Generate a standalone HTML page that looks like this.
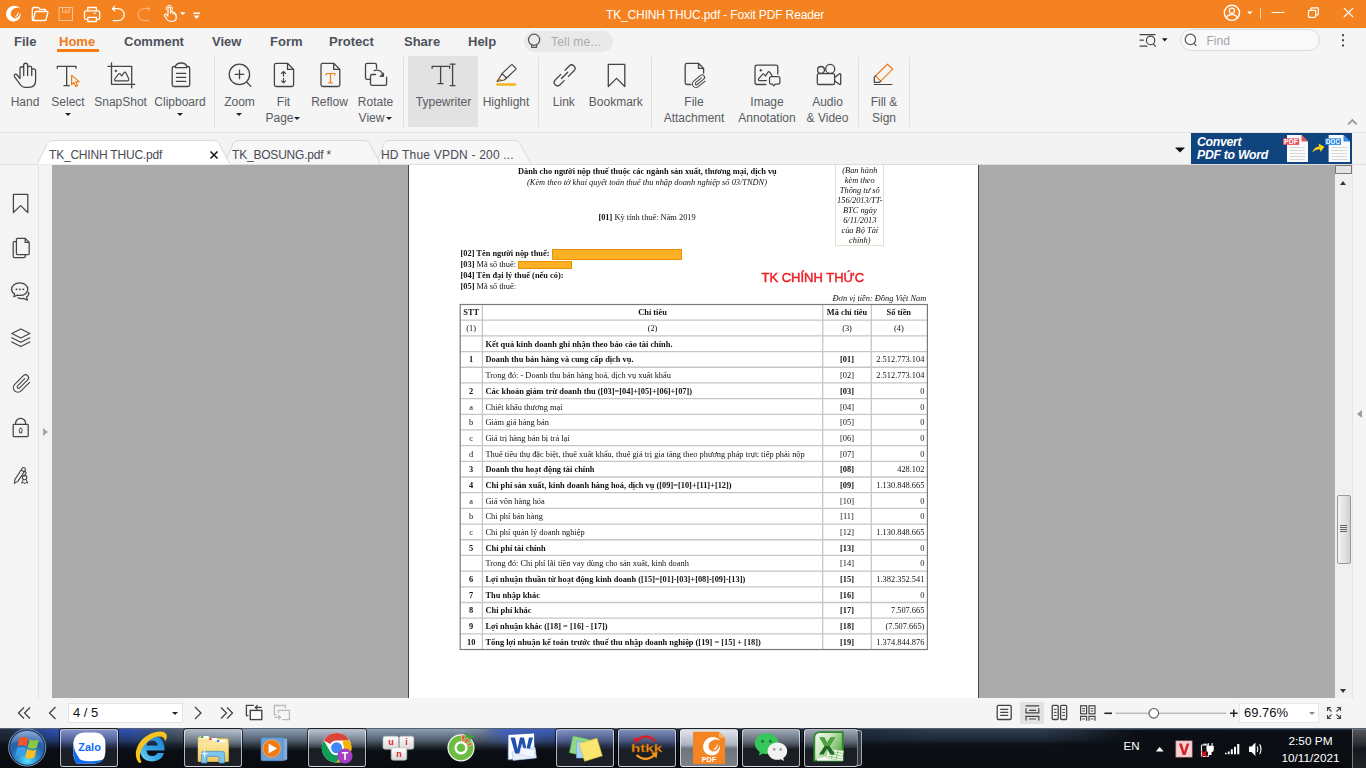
<!DOCTYPE html>
<html><head><meta charset="utf-8"><title>TK_CHINH THUC.pdf - Foxit PDF Reader</title>
<style>
html,body{margin:0;padding:0;}
body{width:1366px;height:768px;overflow:hidden;position:relative;background:#f5f5f5;font-family:"Liberation Sans",sans-serif;font-size:12px;color:#4a4a4a;}
div,span{position:absolute;white-space:pre;}
.c{transform:translateX(-50%);text-align:center;}
#title{left:0;top:0;width:1366px;height:28px;background:#f58220;}
.t{left:606px;top:8px;font-size:12px;line-height:14px;color:#fff;letter-spacing:-0.14px;}
#menu{left:0;top:28px;width:1366px;height:26px;background:#f5f5f5;}
.m{font-weight:bold;font-size:13px;line-height:16px;color:#4d525b;}
#ribbon{left:0;top:54px;width:1366px;height:78px;background:#f5f5f5;border-bottom:1px solid #e2e2e2;}
.lb{font-size:12px;line-height:16px;color:#585b62;}
.sep{width:1px;top:57px;height:70px;background:#e0e0e0;}
.dd{width:0;height:0;border-left:3px solid transparent;border-right:3px solid transparent;border-top:3.5px solid #222;}
#tabs{left:0;top:133px;width:1366px;height:32px;background:#f3f3f3;}
.tab{font-size:12px;line-height:14px;top:148px;color:#4a4a55;letter-spacing:-0.2px}
#side{left:0;top:165px;width:38px;height:533px;background:#f4f4f4;border-right:1px solid #e2e2e2;}
#side2{left:39px;top:165px;width:13px;height:533px;background:#f4f4f4;}
#gray{left:52px;top:165px;width:1283px;height:533px;background:#ababab;}
#page{left:408px;top:165px;width:571px;height:533px;background:#fff;border-left:1px solid #474747;border-right:1px solid #474747;box-sizing:border-box}
#vs{left:1335px;top:165px;width:17px;height:533px;background:#f0f0f0;}
#rp{left:1352px;top:165px;width:14px;height:533px;background:#f5f5f5;border-left:1px solid #e4e4e4;box-sizing:border-box}
#status{left:0;top:698px;width:1366px;height:30px;background:#f5f5f5;}
#task{left:0;top:728px;width:1366px;height:40px;background:linear-gradient(#3a4656 0,#202c3c 2px,#19232f 12px,#0c1016 17px,#080a0e 40px);}
.p{font-family:"Liberation Serif",serif;font-size:8.37px;line-height:10px;color:#111;}
.b{font-weight:bold}.i{font-style:italic}
.tb{top:732px;height:35px;width:57px;border:1px solid rgba(255,255,255,.38);border-radius:3px;box-sizing:border-box;background:linear-gradient(rgba(255,255,255,.30),rgba(255,255,255,.12) 45%,rgba(255,255,255,.03) 50%,rgba(255,255,255,.10));box-shadow:0 0 0 1px rgba(0,0,0,.55)}
</style></head><body>

<div id="title"><span class="t">TK_CHINH THUC.pdf - Foxit PDF Reader</span></div>
<div id="menu"></div>
<span class="m" style="left:14px;top:34px">File</span>
<span class="m" style="left:59px;color:#f07a14;top:34px">Home</span>
<span class="m" style="left:124px;top:34px">Comment</span>
<span class="m" style="left:212px;top:34px">View</span>
<span class="m" style="left:270px;top:34px">Form</span>
<span class="m" style="left:329px;top:34px">Protect</span>
<span class="m" style="left:404px;top:34px">Share</span>
<span class="m" style="left:468px;top:34px">Help</span>
<div style="left:57px;top:49px;width:42px;height:3px;background:#f57c14"></div>
<div style="left:524px;top:31px;width:89px;height:21px;border-radius:10.5px;background:#e9e9e9"></div>
<span style="left:551px;top:35px;font-size:12px;line-height:15px;color:#a9a9b0;letter-spacing:.2px">Tell me...</span>
<div style="left:1180px;top:29px;width:138px;height:20px;border-radius:11px;background:#f9f9f9;border:1px solid #dcdcdc"></div>
<span style="left:1206.5px;top:34px;font-size:12px;line-height:15px;color:#a3a3ad">Find</span>
<div id="ribbon"></div>
<div style="left:408px;top:56px;width:70px;height:71px;background:#e2e2e2"></div>
<div class="sep" style="left:214px"></div>
<div class="sep" style="left:403px"></div>
<div class="sep" style="left:538px"></div>
<div class="sep" style="left:651px"></div>
<div class="sep" style="left:858px"></div>
<div class="sep" style="left:909px"></div>
<span class="lb c" style="left:25px;top:94px">Hand</span>
<span class="lb c" style="left:68px;top:94px">Select</span>
<div class="dd" style="left:64.5px;top:113px"></div>
<span class="lb c" style="left:120.6px;top:94px">SnapShot</span>
<span class="lb c" style="left:180px;top:94px">Clipboard</span>
<div class="dd" style="left:176.5px;top:113px"></div>
<span class="lb c" style="left:239.5px;top:94px">Zoom</span>
<div class="dd" style="left:236.0px;top:113px"></div>
<span class="lb c" style="left:283.5px;top:94px">Fit</span>
<span class="lb c" style="left:279.5px;top:110px">Page</span>
<span class="lb c" style="left:329.5px;top:94px">Reflow</span>
<span class="lb c" style="left:375.5px;top:94px">Rotate</span>
<span class="lb c" style="left:371.5px;top:110px">View</span>
<span class="lb c" style="left:443.5px;top:94px">Typewriter</span>
<span class="lb c" style="left:506px;top:94px">Highlight</span>
<span class="lb c" style="left:563.8px;top:94px">Link</span>
<span class="lb c" style="left:615.8px;top:94px">Bookmark</span>
<span class="lb c" style="left:694px;top:94px">File</span>
<span class="lb c" style="left:694px;top:110px">Attachment</span>
<span class="lb c" style="left:767px;top:94px">Image</span>
<span class="lb c" style="left:767px;top:110px">Annotation</span>
<span class="lb c" style="left:827.5px;top:94px">Audio</span>
<span class="lb c" style="left:827.5px;top:110px">& Video</span>
<span class="lb c" style="left:884px;top:94px">Fill &</span>
<span class="lb c" style="left:884px;top:110px">Sign</span>
<div class="dd" style="left:293.5px;top:117px"></div>
<div class="dd" style="left:385.5px;top:117px"></div>
<svg style="position:absolute;left:1346px;top:117px" width="14" height="10" viewBox="1346 117 14 10"><path d="M1348.200 124.300L1352.400 120L1356.600 124.300" stroke="#9a9a9a" stroke-width="1.800" fill="none"/></svg>
<div id="tabs"></div>
<svg style="position:absolute;left:0;top:133px" width="1366" height="33" viewBox="0 133 1366 33">
<path d="M375.5 165 L384 143.5 Q385.3 140.5 389 140.5 L514 140.5 Q518.5 140.5 520 143.5 L531.5 165 Z" fill="#f7f7f7" stroke="#dadada"/>
<path d="M224 165 L233 143.5 Q234.3 140.5 238 140.5 L364 140.5 Q368 140.5 369.5 143.5 L381 165 Z" fill="#f7f7f7" stroke="#dadada"/>
<path d="M0 164.5 L1366 164.5" stroke="#dcdcdc"/>
<path d="M37 164.5 L47.5 143.5 Q49 140.5 53 140.5 L213 140.5 Q217.5 140.5 219 143.5 L230 164.5" fill="#ffffff" stroke="#dadada"/><path d="M37 164.5H230" stroke="#ececec"/>
<path d="M210.5 151.5 L217.5 158.5 M217.5 151.5 L210.5 158.5" stroke="#111" stroke-width="1.5"/>
<path d="M1175 147.5 L1185 147.5 L1180 152.5 Z" fill="#111"/>
</svg>
<span class="tab" style="left:49px">TK_CHINH THUC.pdf</span>
<span class="tab" style="left:232px">TK_BOSUNG.pdf *</span>
<span class="tab" style="left:381px;letter-spacing:0.2px">HD Thue VPDN - 200 ...</span>
<div style="left:1191px;top:133px;width:161px;height:31px;background:#0f447f"></div>
<span style="left:1197px;top:136px;font-size:12.3px;line-height:13.1px;font-weight:bold;font-style:italic;color:#fff;letter-spacing:-0.3px">Convert
PDF to Word</span>
<div id="side"></div><div id="side2"></div><div id="gray"></div><div id="page"></div><div id="vs"></div><div id="rp"></div><div id="pdftxt" style="left:0;top:0;width:1366px;height:768px;will-change:transform;opacity:.999">
<span class="p c b" style="left:647.4px;top:166.60px;">Dành cho người nộp thuế thuộc các ngành sản xuất, thương mại, dịch vụ</span>
<span class="p c i" style="left:647.0px;top:177.60px;">(Kèm theo tờ khai quyết toán thuế thu nhập doanh nghiệp số 03/TNDN)</span>
<span class="p " style="left:598.4px;top:212.70px;"><b>[01]</b> Kỳ tính thuế: Năm 2019</span>
<div style="left:835px;top:160px;width:49px;height:86px;border:1px solid #e6e1d0;box-sizing:border-box;clip-path:inset(5px 0 0 0)"></div>
<span class="p c i" style="left:859.8px;top:165.80px;">(Ban hành</span>
<span class="p c i" style="left:859.8px;top:175.84px;">kèm theo</span>
<span class="p c i" style="left:859.8px;top:185.88px;">Thông tư số</span>
<span class="p c i" style="left:859.8px;top:195.92px;">156/2013/TT-</span>
<span class="p c i" style="left:859.8px;top:205.96px;">BTC ngày</span>
<span class="p c i" style="left:859.8px;top:216.00px;">6/11/2013</span>
<span class="p c i" style="left:859.8px;top:226.04px;">của Bộ Tài</span>
<span class="p c i" style="left:859.8px;top:236.08px;">chính)</span>
<span class="p b" style="left:460.5px;top:249.10px;">[02] Tên người nộp thuế:</span>
<span class="p " style="left:460.5px;top:260.00px;"><b>[03]</b> Mã số thuế:</span>
<span class="p b" style="left:460.5px;top:270.90px;">[04] Tên đại lý thuế (nếu có):</span>
<span class="p " style="left:460.5px;top:281.80px;"><b>[05]</b> Mã số thuế:</span>
<div style="left:552px;top:249px;width:130px;height:10.5px;background:#fcb024;border:1px solid #ee8f08;box-sizing:border-box"></div>
<div style="left:517.5px;top:261.3px;width:54.5px;height:8.2px;background:#fcb024;border:1px solid #ee8f08;box-sizing:border-box"></div>
<span style="left:761.5px;top:270px;font-size:13px;line-height:16px;color:#ee1d23;-webkit-text-stroke:0.45px #ee1d23">TK CHÍNH THỨC</span>
<span class="p i" style="right:439.80px;top:293.60px;">Đơn vị tiền: Đồng Việt Nam</span>
<svg style="position:absolute;left:0;top:0" width="1366" height="768" viewBox="0 0 1366 768" fill="none"><path d="M460.2 320.18H927.4M460.2 335.87H927.4M460.2 351.55H927.4M460.2 367.23H927.4M460.2 382.91H927.4M460.2 398.60H927.4M460.2 414.28H927.4M460.2 429.96H927.4M460.2 445.65H927.4M460.2 461.33H927.4M460.2 477.01H927.4M460.2 492.70H927.4M460.2 508.38H927.4M460.2 524.06H927.4M460.2 539.75H927.4M460.2 555.43H927.4M460.2 571.11H927.4M460.2 586.79H927.4M460.2 602.48H927.4M460.2 618.16H927.4M460.2 633.84H927.4M482.4 304.5V649.53M822.7 304.5V649.53M871.3 304.5V649.53" stroke="#c6c6c6" stroke-width="1.3"/><rect x="460.2" y="304.5" width="467.20" height="345.03" stroke="#7a7a7a" stroke-width="1.2"/></svg>
<span class="p c b" style="left:471.2px;top:308.40px;">STT</span>
<span class="p c b" style="left:652.5px;top:308.40px;">Chỉ tiêu</span>
<span class="p c b" style="left:847.0px;top:308.40px;">Mã chỉ tiêu</span>
<span class="p c b" style="left:898.8px;top:308.40px;">Số tiền</span>
<span class="p c " style="left:471.2px;top:324.08px;">(1)</span>
<span class="p c " style="left:652.5px;top:324.08px;">(2)</span>
<span class="p c " style="left:847.0px;top:324.08px;">(3)</span>
<span class="p c " style="left:898.8px;top:324.08px;">(4)</span>
<span class="p b" style="left:485.5px;top:339.77px;">Kết quả kinh doanh ghi nhận theo báo cáo tài chính.</span>
<span class="p c b" style="left:471.2px;top:355.45px;">1</span>
<span class="p b" style="left:485.5px;top:355.45px;">Doanh thu bán hàng và cung cấp dịch vụ.</span>
<span class="p c b" style="left:847.0px;top:355.45px;">[01]</span>
<span class="p " style="right:441.60px;top:355.45px;">2.512.773.104</span>
<span class="p " style="left:485.5px;top:371.13px;">Trong đó: - Doanh thu bán hàng hoá, dịch vụ xuất khẩu</span>
<span class="p c " style="left:847.0px;top:371.13px;">[02]</span>
<span class="p " style="right:441.60px;top:371.13px;">2.512.773.104</span>
<span class="p c b" style="left:471.2px;top:386.81px;">2</span>
<span class="p b" style="left:485.5px;top:386.81px;">Các khoản giảm trừ doanh thu ([03]=[04]+[05]+[06]+[07])</span>
<span class="p c b" style="left:847.0px;top:386.81px;">[03]</span>
<span class="p " style="right:441.60px;top:386.81px;">0</span>
<span class="p c " style="left:471.2px;top:402.50px;">a</span>
<span class="p " style="left:485.5px;top:402.50px;">Chiết khấu thương mại</span>
<span class="p c " style="left:847.0px;top:402.50px;">[04]</span>
<span class="p " style="right:441.60px;top:402.50px;">0</span>
<span class="p c " style="left:471.2px;top:418.18px;">b</span>
<span class="p " style="left:485.5px;top:418.18px;">Giảm giá hàng bán</span>
<span class="p c " style="left:847.0px;top:418.18px;">[05]</span>
<span class="p " style="right:441.60px;top:418.18px;">0</span>
<span class="p c " style="left:471.2px;top:433.86px;">c</span>
<span class="p " style="left:485.5px;top:433.86px;">Giá trị hàng bán bị trả lại</span>
<span class="p c " style="left:847.0px;top:433.86px;">[06]</span>
<span class="p " style="right:441.60px;top:433.86px;">0</span>
<span class="p c " style="left:471.2px;top:449.55px;">d</span>
<span class="p " style="left:485.5px;top:449.55px;">Thuế tiêu thụ đặc biệt, thuế xuất khẩu, thuế giá trị gia tăng theo phương pháp trực tiếp phải nộp</span>
<span class="p c " style="left:847.0px;top:449.55px;">[07]</span>
<span class="p " style="right:441.60px;top:449.55px;">0</span>
<span class="p c b" style="left:471.2px;top:465.23px;">3</span>
<span class="p b" style="left:485.5px;top:465.23px;">Doanh thu hoạt động tài chính</span>
<span class="p c b" style="left:847.0px;top:465.23px;">[08]</span>
<span class="p " style="right:441.60px;top:465.23px;">428.102</span>
<span class="p c b" style="left:471.2px;top:480.91px;">4</span>
<span class="p b" style="left:485.5px;top:480.91px;">Chi phí sản xuất, kinh doanh hàng hoá, dịch vụ ([09]=[10]+[11]+[12])</span>
<span class="p c b" style="left:847.0px;top:480.91px;">[09]</span>
<span class="p " style="right:441.60px;top:480.91px;">1.130.848.665</span>
<span class="p c " style="left:471.2px;top:496.60px;">a</span>
<span class="p " style="left:485.5px;top:496.60px;">Giá vốn hàng hóa</span>
<span class="p c " style="left:847.0px;top:496.60px;">[10]</span>
<span class="p " style="right:441.60px;top:496.60px;">0</span>
<span class="p c " style="left:471.2px;top:512.28px;">b</span>
<span class="p " style="left:485.5px;top:512.28px;">Chi phí bán hàng</span>
<span class="p c " style="left:847.0px;top:512.28px;">[11]</span>
<span class="p " style="right:441.60px;top:512.28px;">0</span>
<span class="p c " style="left:471.2px;top:527.96px;">c</span>
<span class="p " style="left:485.5px;top:527.96px;">Chi phí quản lý doanh nghiệp</span>
<span class="p c " style="left:847.0px;top:527.96px;">[12]</span>
<span class="p " style="right:441.60px;top:527.96px;">1.130.848.665</span>
<span class="p c b" style="left:471.2px;top:543.64px;">5</span>
<span class="p b" style="left:485.5px;top:543.64px;">Chi phí tài chính</span>
<span class="p c b" style="left:847.0px;top:543.64px;">[13]</span>
<span class="p " style="right:441.60px;top:543.64px;">0</span>
<span class="p " style="left:485.5px;top:559.33px;">Trong đó: Chi phí lãi tiền vay dùng cho sản xuất, kinh doanh</span>
<span class="p c " style="left:847.0px;top:559.33px;">[14]</span>
<span class="p " style="right:441.60px;top:559.33px;">0</span>
<span class="p c b" style="left:471.2px;top:575.01px;">6</span>
<span class="p b" style="left:485.5px;top:575.01px;">Lợi nhuận thuần từ hoạt động kinh doanh ([15]=[01]-[03]+[08]-[09]-[13])</span>
<span class="p c b" style="left:847.0px;top:575.01px;">[15]</span>
<span class="p " style="right:441.60px;top:575.01px;">1.382.352.541</span>
<span class="p c b" style="left:471.2px;top:590.69px;">7</span>
<span class="p b" style="left:485.5px;top:590.69px;">Thu nhập khác</span>
<span class="p c b" style="left:847.0px;top:590.69px;">[16]</span>
<span class="p " style="right:441.60px;top:590.69px;">0</span>
<span class="p c b" style="left:471.2px;top:606.38px;">8</span>
<span class="p b" style="left:485.5px;top:606.38px;">Chi phí khác</span>
<span class="p c b" style="left:847.0px;top:606.38px;">[17]</span>
<span class="p " style="right:441.60px;top:606.38px;">7.507.665</span>
<span class="p c b" style="left:471.2px;top:622.06px;">9</span>
<span class="p b" style="left:485.5px;top:622.06px;">Lợi nhuận khác ([18] = [16] - [17])</span>
<span class="p c b" style="left:847.0px;top:622.06px;">[18]</span>
<span class="p " style="right:441.60px;top:622.06px;">(7.507.665)</span>
<span class="p c b" style="left:471.2px;top:637.74px;">10</span>
<span class="p b" style="left:485.5px;top:637.74px;">Tổng lợi nhuận kế toán trước thuế thu nhập doanh nghiệp ([19] = [15] + [18])</span>
<span class="p c b" style="left:847.0px;top:637.74px;">[19]</span>
<span class="p " style="right:441.60px;top:637.74px;">1.374.844.876</span>
</div><div style="left:1335px;top:165px;width:17px;height:9px;background:#e2e2e2;border:1px solid #777;box-sizing:border-box"></div>
<div style="left:1340px;top:181px;width:0;height:0;border-left:3.5px solid transparent;border-right:3.5px solid transparent;border-bottom:4px solid #333"></div>
<div style="left:1340px;top:689px;width:0;height:0;border-left:3.5px solid transparent;border-right:3.5px solid transparent;border-top:4px solid #333"></div>
<div style="left:1336.5px;top:495px;width:14px;height:69px;border:1px solid #9a9a9a;border-radius:2px;box-sizing:border-box;background:linear-gradient(90deg,#f4f4f4,#e2e2e2 50%,#cfcfcf)"></div>
<div style="left:1340px;top:525px;width:7px;height:1px;background:#666"></div>
<div style="left:1340px;top:527px;width:7px;height:1px;background:#666"></div>
<div style="left:1340px;top:529px;width:7px;height:1px;background:#666"></div>
<div style="left:1340px;top:531px;width:7px;height:1px;background:#666"></div>
<div style="left:1357px;top:410px;width:0;height:0;border-top:4.5px solid transparent;border-bottom:4.5px solid transparent;border-right:5px solid #9c9c9c"></div>
<div style="left:43px;top:428px;width:0;height:0;border-top:4.5px solid transparent;border-bottom:4.5px solid transparent;border-left:5px solid #a6a6a6"></div>
<div id="status"></div>
<div style="left:68px;top:703px;width:115px;height:20px;background:#fff;border:1px solid #e3e3e3;box-sizing:border-box"></div>
<span style="left:73px;top:705px;font-size:13px;line-height:16px;color:#111">4 / 5</span>
<div class="dd" style="left:172px;top:711.5px"></div>
<div style="left:1239px;top:703px;width:80px;height:20px;background:#fff;border:1px solid #e8e8e8;box-sizing:border-box"></div>
<span style="left:1244px;top:705px;font-size:13px;line-height:16px;color:#111">69.76%</span>
<div class="dd" style="left:1309px;top:711.5px;border-top-color:#888"></div>
<div style="left:1020px;top:702px;width:24px;height:22px;background:#e2e2e2"></div>
<svg style="position:absolute;left:0;top:698px" width="1366" height="30" viewBox="0 698 1366 30" fill="none" stroke="#444" stroke-width="1.3">
<path d="M24 707.5L18.5 713L24 718.5M30 707.5L24.5 713L30 718.5"/>
<path d="M55.5 707L49.5 713L55.5 719"/>
<path d="M195 707L201 713L195 719"/>
<path d="M221 707.5L226.500 713L221 718.5M227 707.5L232.5 713L227 718.5"/>
<path d="M253.800 705.300H246.400V715.600H248.400M261.800 707.400H255.400M257.600 705.200L255.300 707.400L257.600 709.600" stroke-width="1.300"/><rect x="250.300" y="710.400" width="11.500" height="9.200" fill="#fcfcfc" stroke-width="1.400"/>
<g stroke="#bcbcbc" stroke-width="1.300"><path d="M276.500 714.900H274.400V705.500H285.400V708.500M278.400 713V710.300H289.400V719.600H282.200M274.200 717.400H280.400M278.200 715.200L280.500 717.400L278.200 719.600"/></g>
<rect x="997.200" y="705.300" width="14" height="14.200" rx="1.200"/><path d="M1000.200 709.400H1008.200M1000.200 712.400H1008.200M1000.200 715.400H1008.200" stroke-width="1.100"/>
<path d="M1025.600 705.800H1039.200M1026 708.200V712.800H1038.800V708.200M1029 710.400H1036M1026 720.600V716.400H1038.800V720.600M1029 719H1036" stroke-width="1.200"/>
<rect x="1052.200" y="705.300" width="6" height="14.200" rx="1"/><rect x="1060.600" y="705.300" width="6" height="14.200" rx="1"/><path d="M1053.800 709.400H1056.600M1053.800 712.400H1056.600M1053.800 715.400H1056.600M1062.200 709.400H1065M1062.200 712.400H1065M1062.200 715.400H1065" stroke-width="1"/>
<rect x="1080.600" y="705.800" width="6" height="8" stroke-width="1.200"/><rect x="1089" y="705.800" width="6" height="8" stroke-width="1.200"/><path d="M1082.200 708.600H1085M1082.200 711H1085M1090.600 708.600H1093.400M1090.600 711H1093.400" stroke-width="1"/>
<path d="M1080.600 720.800V716.400H1086.600V720.800M1089 720.800V716.400H1095V720.800M1082.200 719H1085M1090.600 719H1093.400" stroke-width="1.200"/>
<path d="M1104.400 713.300H1112" stroke="#222" stroke-width="1.6"/>
<path d="M1115.500 713.300H1226.500" stroke="#bdbdbd" stroke-width="1.4"/>
<circle cx="1153.800" cy="713.300" r="4.800" fill="#fff" stroke="#555" stroke-width="1.1"/>
<path d="M1230 713.300H1237.600M1233.800 709.500V717.100" stroke="#222" stroke-width="1.5"/>
<path d="M1327.500 711V707.500H1331M1337 707.500H1340.500V711M1340.500 715V718.500H1337M1331 718.500H1327.500V715M1327.500 707.500L1331.500 711.500M1340.500 707.500L1336.500 711.500M1340.500 718.500L1336.500 714.500M1327.500 718.500L1331.500 714.500" stroke-width="1.1"/>
</svg><svg style="position:absolute;left:0;top:0" width="1366" height="28" viewBox="0 0 1366 28" fill="none" stroke="#fff" stroke-width="1.3" stroke-linecap="round" stroke-linejoin="round">
<path d="M20.8 9.2C18.6 5.6 13 4.6 9.2 7.6C5.400 10.600 5 16.600 8.600 19.800C11.800 22.600 17 22 19.400 18.600C20.600 16.800 20.800 14.600 20.200 12.800C19.800 15.200 18.400 17.400 16.200 18C13.400 18.800 11 16.800 10.800 14.200C10.600 11.200 12.800 8.600 15.800 8C17.800 7.600 19.600 8.200 20.800 9.200Z" fill="#fff" stroke="none"/>
<path d="M14.600 16.400C15.400 15.800 16.800 15.600 17.200 14.200C17.400 13.200 18.200 12.600 18.600 11.400C18.800 13 18.400 15.200 17.200 16.200C16.400 16.800 15.400 16.800 14.600 16.400Z" fill="#fff" stroke="none"/>
<path d="M33.200 20.500H44.800Q45.800 20.500 46 19.500L47.900 12.500Q48.100 11.500 47 11.500H36.200Q35.200 11.500 35 12.500L33.200 20.500ZM33.200 20.500Q32.300 20.500 32.300 19.500V9.300Q32.300 7.500 34 7.500H37.800Q38.800 7.500 39.300 8.500L39.800 9.300H44.300Q45.800 9.300 45.800 10.800V11.500"/>
<g stroke="#fac496" stroke-width="1"><rect x="59.500" y="7.500" width="13" height="13"/><path d="M62.500 7.500V12.200H69.200V7.500M65.200 10.200H66.800"/></g>
<rect x="84.500" y="10.800" width="15.200" height="8.600" rx="1.300"/><path d="M87.800 10.800V7.500H96.400V10.800"/><rect x="87.800" y="17.300" width="8.600" height="4.200" fill="#f58220"/><path d="M93.800 13.200H95.600" stroke-width="1.100"/>
<path d="M113.200 20.600H118.200A6 6 0 0 0 118.200 8.600H112.600M114.600 6.400L112.400 8.600L114.600 10.800"/>
<g stroke="#f9b88a" stroke-width="1"><path d="M149 20.600H144.200A6 6 0 0 1 144.200 8.600H149.600M147.600 6.400L149.800 8.600L147.600 10.800"/></g>
<path d="M168 14.500V8.400A1.300 1.300 0 0 1 170.600 8.400V13.200M170.600 12.400A1.200 1.200 0 0 1 173 12.600V14M173 13.200A1.200 1.200 0 0 1 175.200 13.600V14.800M175.200 14.400A0.900 0.900 0 0 1 176.200 15V17.500Q176.200 21.300 172.500 21.300H170.500Q168.500 21.300 167.200 19.500L164.600 15.800Q163.900 14.600 165 14.200Q166 13.900 166.800 14.800L168 16" stroke-width="1.200"/>
<path d="M166.300 9.800A3.200 3.200 0 1 1 172.300 9.600" stroke-width="1"/>
<path d="M180 12.200H185.400L182.700 15.200Z" fill="#fff" stroke="none"/>
<path d="M193.800 13.300H199.400" stroke-width="1.400"/><path d="M193.600 15.600H199.600L196.600 19Z" fill="#fff" stroke="none"/>
<circle cx="1231.900" cy="12.800" r="7.600" stroke-width="1.400"/><circle cx="1231.900" cy="10.800" r="2.600" stroke-width="1.200"/><path d="M1226.800 17.800Q1227.200 14.600 1231.900 14.600Q1236.600 14.600 1237 17.800" stroke-width="1.200"/>
<path d="M1247.200 11.400H1252.400L1249.800 14.400Z" fill="#fff" stroke="none"/>
<path d="M1260.500 8.400V18.600" stroke-width="1" stroke="#fbd0ac"/>
<path d="M1272 12.500H1284" stroke-width="1.200"/>
<path d="M1311 10.300V8.600Q1311 7.900 1311.700 7.900H1317.600Q1318.300 7.900 1318.300 8.600V14.200Q1318.300 14.900 1317.600 14.900H1316" stroke-width="1.200"/><rect x="1308.500" y="10.400" width="7.200" height="7" rx="0.800" stroke-width="1.200"/>
<path d="M1344.200 8.400L1352.800 16.800M1352.800 8.400L1344.200 16.800" stroke-width="1.200"/>
</svg>
<svg style="position:absolute;left:0;top:28px" width="1366" height="26" viewBox="0 28 1366 26" fill="none" stroke="#454545" stroke-width="1.200" stroke-linecap="round" stroke-linejoin="round">
<circle cx="534.100" cy="39.800" r="5.600" stroke="#555"/><path d="M531.600 45.400V47.300H536.600V45.400" stroke="#555"/>
<path d="M1140 34.600H1155M1140 40.200H1143.400M1140 46.200H1147"/><circle cx="1150.600" cy="40.400" r="4.200"/><path d="M1153.400 43.800L1155.400 46.400"/>
<path d="M1162 38.200H1167.400L1164.700 41.400Z" fill="#111" stroke="none"/>
<circle cx="1190.400" cy="39.400" r="5.200" stroke="#555"/><path d="M1194 43.400L1196 45.600" stroke="#555"/>
<path d="M1342 34.200H1344V36.200H1342ZM1342 39.300H1344V41.300H1342ZM1342 44.400H1344V46.400H1342Z" fill="#444" stroke="none"/>
</svg>
<svg style="position:absolute;left:0;top:54px" width="1366" height="78" viewBox="0 54 1366 78" fill="none" stroke="#454545" stroke-width="1.300" stroke-linecap="round" stroke-linejoin="round">
<!-- hand -->
<path d="M20 78.500L17 74.800Q15.600 73.400 14.600 74.600Q13.800 75.600 14.800 77.200L20.600 85.200Q22.400 87.300 25 87.300H29Q35.600 87.300 35.600 80.500V70.800A1.950 1.950 0 0 0 31.700 70.800V75.500M31.700 71V68.200A2.050 2.050 0 0 0 27.600 68.200V75.500M27.600 68.200V65.200A1.950 1.950 0 0 0 23.700 65.200V75.500M23.700 68.600A1.850 1.850 0 0 0 20 68.600V78.500"/>
<!-- select -->
<path d="M57.300 68.300V66.300H76V68.300M66.650 66.300V85.700M64 85.700H69.300"/>
<path d="M71.600 75.400V84.600L73.900 82.500L75.700 86.400L77.500 85.600L75.800 81.800L79.200 81.600Z" stroke="#f07c16" stroke-width="1.200"/>
<!-- snapshot -->
<path d="M111.500 63V84.300H134.800M108 66.300H131.700V87.800"/><circle cx="115.800" cy="70.900" r="0.900" fill="#454545" stroke-width="0.600"/>
<path d="M115 80.800Q114 80 115 78.600L118.400 74.200Q119.400 73 120.400 74.200L121.800 76L123.900 72.800Q125 71.500 126 73L128.600 78.600Q129.200 80.800 127.400 80.800Z" stroke-width="1.200"/>
<!-- clipboard -->
<path d="M175.400 66.500H174Q172.200 66.500 172.200 68.300V84.700Q172.200 86.500 174 86.500H187.900Q189.700 86.500 189.700 84.700V68.300Q189.700 66.500 187.900 66.500H186.900"/>
<path d="M175.400 67.600V66.400Q176.400 63 181.150 63Q185.900 63 186.900 66.400V67.600Z"/>
<path d="M176.400 73.400H185.800M176.400 77.400H185.800M176.400 81.400H185.800" stroke-width="1.200"/>
<!-- zoom -->
<circle cx="239.400" cy="74.400" r="10.200"/><path d="M246.700 82L250.800 86.400M235.300 74.400H243.700M239.500 70.200V78.700"/>
<!-- fit page -->
<path d="M276.200 63.300H287.500L293.600 69.400V84.700Q293.600 86.500 291.800 86.500H276.200Q274.400 86.500 274.400 84.700V65.100Q274.400 63.300 276.200 63.300ZM287.500 63.300V69.400H293.600"/>
<path d="M283.500 71.600V76.200M281.500 73.500L283.500 71.500L285.500 73.500M283.500 78.200V82.800M281.500 80.800L283.500 82.900L285.500 80.800" stroke-width="1.100"/>
<!-- reflow -->
<path d="M322.800 63.300H333.700L339.800 69.400V84.700Q339.800 86.500 338 86.500H322.800Q321 86.500 321 84.700V65.100Q321 63.300 322.800 63.300ZM333.700 63.300V69.400H339.800"/>
<path d="M326.200 75V73.500H334.800V75M330.500 73.500V82.800M328.800 82.800H332.200" stroke="#f07c16" stroke-width="1.200"/>
<!-- rotate view -->
<path d="M370.200 79.300H367.100Q365.500 79.300 365.500 77.700V65Q365.500 63.400 367.100 63.400H374.900Q376.500 63.400 376.500 65V68.600"/>
<path d="M375.600 74.500H372.100Q370.500 74.500 370.500 76.100V83.700Q370.500 85.300 372.100 85.300H385Q386.600 85.300 386.600 83.700V77.200"/>
<path d="M374.100 70.600Q381.200 68.600 383.300 75.800" stroke-width="1.200"/><path d="M380.100 76.400H383.600V73.300Z" fill="#454545" stroke-width="0.900"/>
<!-- typewriter -->
<path d="M432.100 68.300V66.300H449.700V68.300M440.600 66.300V83.700M438 83.700H443.100M452.600 64.200V85.700M450.200 64.200H455M450.200 85.700H455"/>
<!-- highlight -->
<path d="M511.200 64.900Q511.800 64.300 512.400 64.900L515.700 68.200Q516.300 68.800 515.700 69.400L506.600 78L502 73.600ZM502 73.600L500 77L497 81.300L504.200 80L506.600 78" stroke-width="1.200"/>
<path d="M497.200 81.200L499.400 78L501.800 80.300Z" fill="#c98d2e" stroke="none"/>
<path d="M497.200 84.500H515.200" stroke="#f5b21c" stroke-width="2.300"/>
<!-- link -->
<g transform="rotate(-45 564.600 75.400)"><path d="M562.600 72H554.700A3.400 3.400 0 0 0 554.700 78.800H560.600"/><path d="M566.600 78.800H574.500A3.400 3.400 0 0 0 574.500 72H568.600"/><path d="M560.200 75.400H569"/></g>
<!-- bookmark -->
<path d="M608.300 64.300H624.800V86.500L616.550 78.400L608.300 86.500Z"/>
<!-- file attachment -->
<path d="M691 84.500H687Q685.200 84.500 685.200 82.700V65.100Q685.200 63.300 687 63.300H698.500L703.600 68.400V73M698.500 63.300V68.400H703.600"/>
<g transform="rotate(-40 699.300 81.200)" stroke-width="1.050"><path d="M703 80H695.600A1.200 1.200 0 0 0 695.600 82.400H704A2.400 2.400 0 0 0 704 77.600H695A3.600 3.600 0 0 0 695 84.800H703.800"/></g>
<!-- image annotation -->
<path d="M765.800 84.500H757Q755 84.500 755 82.500V67.200Q755 65.200 757 65.200H775.800Q777.800 65.200 777.800 67.200V74"/>
<circle cx="760.700" cy="70.300" r="0.900" fill="#454545" stroke-width="0.700"/>
<path d="M766.400 80.600H759.300Q757.800 80.200 758.800 78.600L762.400 74.400Q763.300 73.400 764.200 74.400L765.600 76L767.800 72.400Q768.800 71 769.900 72.400L772 75.600" stroke-width="1.200"/>
<path d="M771.500 76.600H778Q779.900 76.600 779.900 78.500V82.300Q779.900 84.200 778 84.200H775.200L773.800 86L772.600 84.200H771.500Q769.500 84.200 769.500 82.300V78.500Q769.500 76.600 771.500 76.600Z" stroke-width="1.200"/>
<!-- audio video -->
<rect x="817.300" y="73.700" width="17.300" height="10.800" rx="1.600"/><circle cx="821" cy="69.900" r="3.400"/><circle cx="830.200" cy="68.900" r="4.500"/>
<path d="M834.600 77.400L839.300 73.900Q840.700 73.200 840.700 74.700V83.500Q840.700 85 839.300 84.200L834.600 80.800"/>
<!-- fill & sign -->
<path d="M887.400 64.200L892.800 69.100L880.700 81.100L875.600 75.800Z" stroke="#f07c16" stroke-width="1.200"/>
<path d="M875.600 75.800L874.300 77.200V82.400H879.500L880.700 81.100" stroke-width="1.200"/>
<path d="M874.200 84.500H892" stroke-width="1.200"/>
</svg>
<svg style="position:absolute;left:0;top:165px" width="52" height="533" viewBox="0 165 52 533" fill="none" stroke="#454545" stroke-width="1.250" stroke-linecap="round" stroke-linejoin="round">
<path d="M13.400 194.300H27.800V212.500L20.600 205.600L13.400 212.500Z"/>
<path d="M16.400 241.600H14.200Q13.200 241.600 13.200 242.600V256.500Q13.200 257.500 14.200 257.500H24.200Q25.200 257.500 25.200 256.500V254.600"/><path d="M17.400 238.400H25.200L29.200 242.400V253.600Q29.200 254.600 28.200 254.600H17.400Q16.400 254.600 16.400 253.600V239.400Q16.400 238.400 17.400 238.400ZM25.200 238.400V242.400H29.200" />
<path d="M19.800 282.800C24.400 282.800 27.800 285.600 27.800 289.200C27.800 292.800 24.400 295.400 19.800 295.400C19 295.400 18.200 295.300 17.400 295.100L13.800 296.800L14.600 293.900C12.800 292.800 11.600 291.100 11.600 289.200C11.600 285.600 15.200 282.800 19.800 282.800Z"/>
<path d="M28.600 292.400C29.100 294 28.300 295.800 26.600 297L27.400 300.200L23.600 298.400C21.600 298.800 19.600 298.600 18 297.800" />
<circle cx="16.400" cy="289.300" r="0.650" fill="#454545" stroke-width="0.500"/><circle cx="19.800" cy="289.300" r="0.650" fill="#454545" stroke-width="0.500"/><circle cx="23.200" cy="289.300" r="0.650" fill="#454545" stroke-width="0.500"/>
<path d="M20.800 329L29.800 333.500L20.800 338L11.800 333.500Z"/><path d="M11.800 337.800L20.800 342.300L29.800 337.800M11.800 342L20.800 346.500L29.800 342"/>
<g transform="translate(22.200 383.300) scale(.9) translate(-21.400 -383.300) rotate(-45 21.400 383.300)" stroke-width="1.250"><path d="M27 381.700H15.800A1.600 1.600 0 0 0 15.800 384.900H28.400A3.300 3.300 0 0 0 28.400 378.300H14.600A5 5 0 0 0 14.600 388.300H28"/></g>
<rect x="13.200" y="424.300" width="15" height="12.300" rx="0.800"/><path d="M15.600 424.300V423.300A5 5 0 0 1 25.600 423.300V424.300"/><path d="M20.700 428.200A1.600 1.600 0 0 1 21.700 431L22 432.800H19.400L19.700 431A1.600 1.600 0 0 1 20.700 428.200Z" stroke-width="1"/>
<path d="M22.600 467.800Q24 467 25 468.200Q25.800 469.400 25 470.600L17.800 481.400L14.400 483.400L15 479.400L22.600 467.800ZM21.200 469.900L23.800 471.800M24.800 470.800L26.200 473L24.200 476" stroke-width="1.100"/>
<circle cx="24.600" cy="477.600" r="2.200" stroke-width="1.100"/><path d="M23.200 479.600L21.600 483.200L23.600 482.400L24.600 483.600M26 479.600L27.800 483.200L25.800 482.400L24.600 483.600" stroke-width="1"/>
</svg>
<svg style="position:absolute;left:1280px;top:133px" width="72" height="31" viewBox="1280 133 72 31">
<path d="M1287 135H1301.500L1308 141.500V162H1287Z" fill="#fafafa"/><path d="M1301.500 135L1308 141.500H1301.500Z" fill="#e4575e"/>
<path d="M1290 147.500H1305M1290 150.500H1305M1290 153.500H1305M1290 156.500H1305M1290 159.500H1305" stroke="#d8d8d8" stroke-width="1"/>
<rect x="1283" y="138.300" width="16.200" height="6.600" fill="#e4575e"/>
<path d="M1328.600 135H1343.500L1350 141.500V162H1328.600Z" fill="#fafafa"/><path d="M1343.500 135L1350 141.500H1343.500Z" fill="#2f8be6"/>
<path d="M1331.500 147.500H1347M1331.500 150.500H1347M1331.500 153.500H1347M1331.500 156.500H1347M1331.500 159.500H1347" stroke="#d8d8d8" stroke-width="1"/>
<rect x="1325" y="138.300" width="16" height="6.600" fill="#2f8be6"/>
<path d="M1312.200 152.600Q1314 146.800 1319.200 146.400L1318.400 143.400L1324.400 146.800L1320.600 152L1320 149.400Q1315.800 149 1312.200 152.600Z" fill="#f7d417"/>
<text x="1284" y="144.200" font-family="Liberation Sans, sans-serif" font-weight="bold" font-size="6.800" fill="#fff" textLength="14.200" lengthAdjust="spacingAndGlyphs">PDF</text>
<text x="1326" y="144.200" font-family="Liberation Sans, sans-serif" font-weight="bold" font-size="6.800" fill="#fff" textLength="14" lengthAdjust="spacingAndGlyphs">DOC</text>
</svg><div id="task"></div>
<div style="left:10px;top:729px;width:165px;height:21px;background:linear-gradient(rgba(46,80,180,1),transparent);-webkit-mask-image:linear-gradient(90deg,transparent,#000 25%,#000 75%,transparent);"></div>
<div style="left:125px;top:729px;width:450px;height:22px;background:linear-gradient(rgba(140,158,178,1),transparent);-webkit-mask-image:linear-gradient(90deg,transparent,#000 25%,#000 75%,transparent);"></div>
<div style="left:480px;top:729px;width:100px;height:20px;background:linear-gradient(rgba(60,95,200,.9),transparent);-webkit-mask-image:linear-gradient(90deg,transparent,#000 25%,#000 75%,transparent);"></div>
<div style="left:860px;top:729px;width:300px;height:14px;background:linear-gradient(rgba(70,85,105,.45),transparent);-webkit-mask-image:linear-gradient(90deg,transparent,#000 25%,#000 75%,transparent);"></div>
<div style="left:1040px;top:730px;width:326px;height:18px;background:linear-gradient(90deg,rgba(10,13,18,0),rgba(10,13,18,.92) 30%,rgba(10,13,18,.95))"></div>
<div style="left:0;top:728px;width:1366px;height:1px;background:#55606e"></div>
<div style="left:60px;top:729px;width:58px;height:38px;box-sizing:border-box;border:1px solid rgba(235,240,250,.72);border-radius:3px;background:linear-gradient(rgba(140,156,204,.88) 0,rgba(92,108,160,.78) 28%,rgba(48,58,90,.7) 46%,rgba(28,32,39,.92) 56%,rgba(31,35,41,.92) 100%);box-shadow:0 0 0 1px rgba(0,0,0,.65)"></div>
<div style="left:184px;top:729px;width:58px;height:38px;box-sizing:border-box;border:1px solid rgba(235,240,250,.72);border-radius:3px;background:linear-gradient(rgba(190,200,212,.80) 0,rgba(120,130,142,.70) 35%,rgba(60,66,74,.6) 50%,rgba(27,31,36,.92) 52%,rgba(32,36,41,.92) 100%);box-shadow:0 0 0 1px rgba(0,0,0,.65)"></div>
<div style="left:308px;top:729px;width:58px;height:38px;box-sizing:border-box;border:1px solid rgba(235,240,250,.72);border-radius:3px;background:linear-gradient(rgba(190,200,212,.80) 0,rgba(120,130,142,.70) 35%,rgba(60,66,74,.6) 50%,rgba(27,31,36,.92) 52%,rgba(32,36,41,.92) 100%);box-shadow:0 0 0 1px rgba(0,0,0,.65)"></div>
<div style="left:556px;top:729px;width:58px;height:38px;box-sizing:border-box;border:1px solid rgba(235,240,250,.72);border-radius:3px;background:linear-gradient(rgba(140,156,204,.88) 0,rgba(92,108,160,.78) 28%,rgba(48,58,90,.7) 46%,rgba(28,32,39,.92) 56%,rgba(31,35,41,.92) 100%);box-shadow:0 0 0 1px rgba(0,0,0,.65)"></div>
<div style="left:618px;top:729px;width:58px;height:38px;box-sizing:border-box;border:1px solid rgba(235,240,250,.72);border-radius:3px;background:linear-gradient(rgba(140,156,204,.88) 0,rgba(92,108,160,.78) 28%,rgba(48,58,90,.7) 46%,rgba(28,32,39,.92) 56%,rgba(31,35,41,.92) 100%);box-shadow:0 0 0 1px rgba(0,0,0,.65)"></div>
<div style="left:680px;top:729px;width:58px;height:38px;box-sizing:border-box;border:1px solid rgba(235,240,250,.72);border-radius:3px;background:linear-gradient(rgba(235,238,245,.95) 0,rgba(190,196,208,.92) 40%,rgba(120,125,132,.92) 52%,rgba(135,140,146,.92) 100%);box-shadow:0 0 0 1px rgba(0,0,0,.65)"></div>
<div style="left:742px;top:729px;width:58px;height:38px;box-sizing:border-box;border:1px solid rgba(235,240,250,.72);border-radius:3px;background:linear-gradient(rgba(190,200,212,.80) 0,rgba(120,130,142,.70) 35%,rgba(60,66,74,.6) 50%,rgba(27,31,36,.92) 52%,rgba(32,36,41,.92) 100%);box-shadow:0 0 0 1px rgba(0,0,0,.65)"></div>
<div style="left:804px;top:729px;width:54px;height:38px;box-sizing:border-box;border:1px solid rgba(235,240,250,.72);border-radius:3px;background:linear-gradient(rgba(190,200,212,.80) 0,rgba(120,130,142,.70) 35%,rgba(60,66,74,.6) 50%,rgba(27,31,36,.92) 52%,rgba(32,36,41,.92) 100%);box-shadow:0 0 0 1px rgba(0,0,0,.65)"></div>
<div style="left:857px;top:730px;width:5px;height:36px;box-sizing:border-box;border:1px solid rgba(235,240,250,.6);border-left:none;border-radius:0 3px 3px 0;background:rgba(80,88,98,.6)"></div>
<div style="left:1352px;top:729px;width:14px;height:39px;border-left:1px solid rgba(255,255,255,.4);background:linear-gradient(rgba(255,255,255,.30),rgba(255,255,255,.10) 45%,rgba(255,255,255,.04) 50%,rgba(255,255,255,.10));box-sizing:border-box"></div>
<span style="left:1123.5px;top:738.5px;font-size:11.5px;line-height:14px;color:#fff">EN</span>
<span class="c" style="left:1310.5px;top:733px;font-size:11.8px;line-height:17px;color:#fff">2:50 PM
10/11/2021</span>
<svg style="position:absolute;left:0;top:728px" width="1366" height="40" viewBox="0 728 1366 40">
<defs>
<radialGradient id="orb" cx="50%" cy="88%" r="85%"><stop offset="0" stop-color="#5fe2ff"/><stop offset=".3" stop-color="#2f9ad8"/><stop offset=".62" stop-color="#2560a8"/><stop offset="1" stop-color="#3f6fb2"/></radialGradient>
<linearGradient id="orbg" x1="0" y1="0" x2="0" y2="1"><stop offset="0" stop-color="#fff" stop-opacity=".55"/><stop offset="1" stop-color="#fff" stop-opacity=".05"/></linearGradient>
<linearGradient id="fold" x1="0" y1="0" x2="0" y2="1"><stop offset="0" stop-color="#fbe9a0"/><stop offset="1" stop-color="#efc65a"/></linearGradient>
<linearGradient id="xl" x1="0" y1="0" x2="1" y2=".6"><stop offset="0" stop-color="#f4faf0"/><stop offset=".45" stop-color="#cfe8c2"/><stop offset="1" stop-color="#57ad45"/></linearGradient>
<linearGradient id="ieg" x1="1" y1="0" x2="0" y2="1"><stop offset="0" stop-color="#1f7fd0"/><stop offset=".6" stop-color="#35a8ea"/><stop offset="1" stop-color="#7fdcfa"/></linearGradient><linearGradient id="key" x1="0" y1="0" x2="0" y2="1"><stop offset="0" stop-color="#fff"/><stop offset="1" stop-color="#d6d6d6"/></linearGradient>
</defs>
<!-- start orb -->
<circle cx="27.2" cy="747.5" r="18.600" fill="#16294a" stroke="#7f97b8" stroke-width="1"/>
<circle cx="27.2" cy="747.5" r="17.200" fill="url(#orb)"/>
<path d="M10.500 744A17.200 17.200 0 0 1 43.900 744Q27.200 736.500 10.500 744Z" fill="url(#orbg)" opacity=".75"/>
<path d="M19.200 738.200Q23.800 735.600 28.400 738.600L26.400 746.600Q22.200 744.200 17.400 746.400Z" fill="#f0562a"/>
<path d="M29.600 739.200Q34 741.800 38.800 739.600L36.800 747.800Q32.200 750 27.600 747.400Z" fill="#8cc83c"/>
<path d="M17 748Q21.600 745.800 26 748.200L24 756.400Q19.800 754 15.200 756.200Z" fill="#3a9fe8"/>
<path d="M27.200 749Q31.600 751.600 36.400 749.400L34.400 757.400Q29.800 759.800 25.200 757.200Z" fill="#fcc01e"/>
<!-- zalo -->
<path d="M76 763Q74.500 760 73.600 756Q72.600 748 73.400 742Q75 732.800 84 732.400H95Q105 732.800 105.400 743V752Q105 762.800 95 763.400H80Q77.500 764.200 76 763Z" fill="#fff"/>
<path d="M73.400 744Q72.500 752 74.600 759.500Q75.500 762.500 76 763Q79 764.500 84 763.400H95Q100.500 763 103 759.500Q96 762 86 761Q79 760.500 78.500 757Q74.500 752 73.400 744Z" fill="#0b6bf5"/>
<text x="89.600" y="751.400" text-anchor="middle" font-family="Liberation Sans, sans-serif" font-weight="bold" font-size="10.500" fill="#0b6bf5" textLength="22.500" lengthAdjust="spacingAndGlyphs">Zalo</text>
<!-- IE -->
<path d="M164.600 750.500H146.500Q147 756 152.500 756Q156 756 157.400 753H164Q161.500 761.400 152 761.400Q140 761 139.600 748Q140 735.800 152 735.400Q164.500 735.800 164.600 750.500ZM146.600 745.500H157.600Q157 740.600 152.200 740.600Q147.200 740.600 146.600 745.500Z" fill="url(#ieg)"/>
<path d="M138 761.500C132.500 752 138.500 740 150 734C157.500 730.200 166 730.500 166.800 735.500C167.200 737.800 166 740 164.800 741.600C165.200 738.400 163.400 735.600 157.600 736.600C149.600 738.200 142 745.400 140.200 753.400C139.500 756.400 140 759.400 141.600 762Q139 764 138 761.500Z" fill="#f7c31c"/>
<!-- explorer -->
<path d="M198 738.500Q198 736.800 199.600 736.800H209L210.500 738.400H226.500Q228.400 738.400 228.400 740.200V761.500H198Z" fill="url(#fold)" stroke="#d9ab3c" stroke-width=".6"/>
<rect x="200.500" y="736" width="8" height="2.600" fill="#fff"/><rect x="200.800" y="736.200" width="2.600" height="1.800" fill="#1fa83c"/>
<rect x="209" y="738" width="8" height="2.600" fill="#fff"/><rect x="209.200" y="738.200" width="2.400" height="1.800" fill="#d6322a"/>
<rect x="216.500" y="740" width="9" height="2.600" fill="#fff"/><rect x="216.800" y="740.200" width="2.600" height="1.800" fill="#2a7de0"/>
<path d="M198 744Q198 742.400 199.600 742.400H226.800Q228.400 742.400 228.400 744V761.500H198Z" fill="url(#fold)" opacity=".95"/>
<path d="M201.500 763V753.500Q201.500 751.400 203.600 751.400H222.400Q224.500 751.400 224.500 753.500V763H219V757.500Q219 756.400 218 756.400H208Q207 756.400 207 757.500V763Z" fill="#7cc4ee" stroke="#3f8fca" stroke-width=".7"/>
<path d="M204.500 749L205.200 753L209 753.600L205.200 754.400L204.500 758.400L203.800 754.400L200 753.600L203.800 753Z" fill="#fff" opacity=".9"/>
<!-- wmp -->
<rect x="265" y="738.500" width="22" height="21.500" rx="1.200" fill="#9cc1e4" stroke="#4d85c0" stroke-width=".6"/>
<rect x="263" y="738" width="22" height="22.400" rx="1.200" fill="#8ab4dc" stroke="#4d85c0" stroke-width=".6"/>
<rect x="261" y="737.600" width="22" height="23.200" rx="1.200" fill="#6d9fd2" stroke="#3f78b8" stroke-width=".6"/>
<circle cx="271.600" cy="748.500" r="8.800" fill="#f27a12" stroke="#ffb060" stroke-width=".8"/>
<path d="M268.600 743.500L277 748.500L268.600 753.600Z" fill="#fff"/>
<!-- chrome -->
<circle cx="336.600" cy="747.800" r="14.800" fill="#fff"/>
<path d="M336.600 733A14.800 14.800 0 0 1 349.420 740.400H336.600A7.400 7.400 0 0 0 330.190 744.100L323.780 740.400A14.800 14.800 0 0 1 336.600 733Z" fill="#db4437"/>
<path d="M349.420 740.400A14.800 14.800 0 0 1 336.600 762.600L343.010 751.500A7.400 7.400 0 0 0 343.010 744.100L343 740.400Z" fill="#f4b400"/>
<path d="M336.600 762.600A14.800 14.800 0 0 1 323.780 740.400L330.190 751.500A7.400 7.400 0 0 0 336.600 755.200L343.010 751.500Z" fill="#0f9d58"/>
<circle cx="336.600" cy="747.800" r="6.900" fill="#fff"/><circle cx="336.600" cy="747.800" r="5.500" fill="#4285f4"/>
<circle cx="345" cy="756" r="7.600" fill="#a33fc4"/>
<path d="M341.800 752.800H348.200M345 752.800V759.800" stroke="#fff" stroke-width="1.600" fill="none"/>
<!-- unikey -->
<g stroke="#b8b8b8" stroke-width=".6"><rect x="383" y="736.200" width="15.600" height="13" rx="2" fill="url(#key)"/><rect x="399.400" y="736.200" width="14.400" height="13" rx="2" fill="url(#key)"/><rect x="391.200" y="747.800" width="15.600" height="12.400" rx="2" fill="url(#key)"/></g>
<g font-family="Liberation Sans, sans-serif" font-weight="bold" font-size="9" fill="#e0262c" text-anchor="middle"><text x="391" y="745.200">u</text><text x="406.600" y="745.200">i</text><text x="399" y="756.600">n</text></g>
<!-- coc coc -->
<circle cx="461" cy="747.800" r="13.600" fill="#f4f8ee"/>
<circle cx="461" cy="747.800" r="12.400" fill="#6dbd45"/>
<path d="M461 747.800L464.500 733.500L474.500 736.500Z" fill="#3d9e3a"/>
<path d="M461 747.800L462 734.800L465.500 735.600ZM461 747.800L467 737.600L469.600 739.800ZM461 747.800L471.400 742.200L472.400 744.600Z" fill="#f04e23" stroke="#fff" stroke-width=".5"/>
<circle cx="461" cy="747.800" r="6.600" fill="#fff"/><circle cx="461" cy="747.800" r="4.300" fill="#6dbd45"/>
<!-- word -->
<path d="M508 734.500L534.500 733V758L508 760Z" fill="#fdfdfd" stroke="#2b5aa8" stroke-width=".8"/>
<path d="M512 752L535 747L536.500 758L513 760.500Z" fill="#e8eefa" stroke="#9db6e0" stroke-width=".5"/>
<path d="M510.500 737.500H515L517.500 749L520 737.500H524L526.400 749L529 737.500H533L528.600 753.500H524.200L522 743L519.600 753.500H515.200Z" fill="#1f4fb0"/>
<path d="M521 747.500L535.600 750L533.500 757.500L519.500 754Z" fill="#f4f7fd" stroke="#b9c9e8" stroke-width=".5"/>
<!-- sticky -->
<rect x="571" y="737.500" width="17" height="17" fill="#8fd88a" stroke="#5cb35a" stroke-width=".6" transform="rotate(12 579 746)"/>
<rect x="576.500" y="741.500" width="16.500" height="16.500" fill="#a9d3f5" stroke="#6da7dc" stroke-width=".6"/>
<rect x="581.500" y="740.500" width="18.500" height="18.500" fill="#f9e66e" stroke="#d9bf3d" stroke-width=".6" transform="rotate(-17 590.700 749.700)"/>
<!-- htkk -->
<path d="M636 741.500Q645.500 732 655.500 741" fill="none" stroke="#e3181e" stroke-width="2.200"/><path d="M633.500 738L640 738.500L636 744Z" fill="#e3181e"/>
<path d="M636.500 755Q645.500 763 654.500 755" fill="none" stroke="#f59a1c" stroke-width="2.200"/><path d="M651 752.500L657.500 752L656.500 758.500Z" fill="#f59a1c"/>
<text x="646.600" y="751.600" text-anchor="middle" font-family="Liberation Sans, sans-serif" font-weight="bold" font-size="11.500" fill="#f59212" stroke="#7a4300" stroke-width=".35" textLength="31" lengthAdjust="spacingAndGlyphs">htkk</text>
<!-- foxit -->
<path d="M693 731.800H719L725 737.800V764H693Z" fill="#f58423"/><path d="M719 731.800V737.800H725Z" fill="#f9b06a"/>
<g transform="translate(711.200 746) scale(1.220) translate(-711 -745.600)"><path d="M718.500 741.500C716.300 738 711 737.200 707.400 740C703.600 743 703.400 748.600 706.800 751.600C709.900 754.200 714.700 753.700 717 750.500C718.100 748.900 718.400 746.800 717.900 745C717.500 747.300 716.100 749.300 714 749.900C711.300 750.600 709 748.800 708.800 746.300C708.600 743.500 710.700 741 713.600 740.400C715.500 740.100 717.300 740.600 718.500 741.500Z" fill="#fff"/>
<path d="M712.400 748.300C713.200 747.700 714.500 747.500 714.900 746.200C715.100 745.200 715.900 744.700 716.300 743.500C716.500 745.100 716.100 747.100 714.900 748.100C714.100 748.700 713.200 748.700 712.400 748.300Z" fill="#fff"/>
</g>
<text x="709" y="761.600" text-anchor="middle" font-family="Liberation Sans, sans-serif" font-weight="bold" font-size="7.500" fill="#fff" textLength="14.500" lengthAdjust="spacingAndGlyphs">PDF</text>
<!-- wechat -->
<path d="M766.600 733.200C773.200 733.200 778.400 737.800 778.400 743.600C778.400 749.400 773.200 754 766.600 754C765.200 754 763.900 753.800 762.700 753.400L759 755.800L759.800 752.100C756.800 750.200 754.900 747.100 754.900 743.600C754.900 737.800 760.100 733.200 766.600 733.200Z" fill="#35c759"/>
<circle cx="762.600" cy="741.200" r="1.500" fill="#1d7a34"/><circle cx="770.400" cy="741.200" r="1.500" fill="#1d7a34"/>
<path d="M777.400 742.600C782.800 742.600 787.200 746.400 787.200 751.200C787.200 754 785.700 756.500 783.300 758.100L784 761L781 759.200C779.900 759.600 778.700 759.800 777.400 759.800C772 759.800 767.600 756 767.600 751.200C767.600 746.400 772 742.600 777.400 742.600Z" fill="#f2f2f2"/>
<circle cx="774.200" cy="749.400" r="1.300" fill="#9a9a9a"/><circle cx="780.600" cy="749.400" r="1.300" fill="#9a9a9a"/>
<!-- excel -->
<path d="M820 732.200H842.800V760.700H814.300V738Q814.300 732.200 820 732.200Z" fill="url(#xl)" stroke="#2c8a2c" stroke-width="1.800"/>
<path d="M817 759L843 750.500V760.700H817Z" fill="#fff" opacity=".9"/>
<path d="M828 748.500L843.800 751L841 761L826 757.500Z" fill="#f5fbf2" stroke="#86c06e" stroke-width=".5"/>
<path d="M829.500 751.200L842.600 753.400M828.800 753.800L841.800 756M828 756.200L841 758.600M833.600 749.600L831.400 758.600M838.200 750.400L836 759.600" stroke="#6cb356" stroke-width=".7" fill="none"/>
<path d="M819.500 737.500H824.300L827.200 743L830.500 737.500H835L829.600 746L835.200 754.500H830.400L827 748.800L823.600 754.500H819L824.600 746Z" fill="#1d6b22"/>
<path d="M819.500 737.500H824.300L827.200 743L830.500 737.500H835L829.600 746L827.200 746L824.600 746Z" fill="#4ca63e"/>
<!-- tray -->
<path d="M1155.800 751.400H1163.600L1159.700 747Z" fill="#fff"/>
<rect x="1176" y="741" width="16" height="16" fill="#f6d4d6" stroke="#e8a6aa" stroke-width=".8"/><path d="M1179 743.500H1182L1184.200 751.500L1186.600 743.500H1189.400L1185.600 755H1182.700Z" fill="#d9232a"/>
<rect x="1201.500" y="745" width="7" height="11.500" rx=".8" fill="none" stroke="#e8e8e8" stroke-width="1.200"/><rect x="1203.500" y="743.600" width="3" height="1.600" fill="#e8e8e8"/>
<path d="M1207 746.400H1213.200V749.500Q1213.200 751.600 1211 751.800V754.500H1209.200V751.800Q1207 751.600 1207 749.500ZM1208.200 743V746.400M1212 743V746.400" fill="#fff" stroke="#fff" stroke-width="1.100"/>
<path d="M1201.600 751.200L1206.800 756.600M1206.800 751.200L1201.600 756.600" stroke="#e3181e" stroke-width="1.600"/>
<path d="M1225 752.800H1226.600V754.200H1225ZM1227.800 751.400H1229.600V754.200H1227.800ZM1230.800 749.200H1232.800V754.200H1230.800ZM1234 746.800H1236V754.200H1234ZM1237.200 744H1239.300V754.200H1237.200Z" fill="#fff"/>
<path d="M1249 746.500H1251.600L1255.400 742.500V756L1251.600 752H1249Z" fill="#fff"/><path d="M1257.200 746.400Q1258.800 749.200 1257.200 752M1259.600 744.400Q1262.400 749.200 1259.600 754" stroke="#fff" stroke-width="1.100" fill="none"/>
</svg></body></html>
